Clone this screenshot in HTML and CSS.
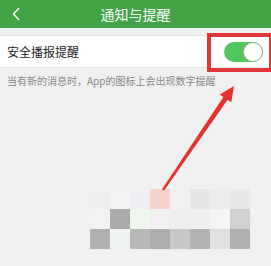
FILE: index.html
```html
<!DOCTYPE html>
<html lang="zh">
<head>
<meta charset="utf-8">
<link rel="stylesheet" href="styles.css">
</head>
<body>
<div class="page">
  <header class="bar">
    <svg class="back" width="8" height="14" viewBox="0 0 8 14"><path d="M7 1 L1.5 7 L7 13" fill="none" stroke="#fff" stroke-width="1.4"/></svg>
    <div class="title">通知与提醒</div>
    <div></div>
  </header>
  <div class="row">
    <span class="label">安全播报提醒</span>
    <span class="switch"><span class="knob"></span></span>
  </div>
  <p class="desc">当有新的消息时，App的图标上会出现数字提醒</p>
  <div class="mosaic">
    <i style="background:#eeeeee"></i><i style="background:#f2f2f2"></i><i style="background:#eeeef4"></i><i style="background:#f8d2ca"></i><i style="background:#f0f0f0"></i><i style="background:#e6e6e6"></i><i style="background:#ebebeb"></i><i style="background:#e8e8e8"></i>
    <i style="background:#f2f2f2"></i><i style="background:#aaaaaa"></i><i style="background:#eef6ee"></i><i style="background:#f0f0f0"></i><i style="background:#eeeeee"></i><i style="background:#efefef"></i><i style="background:#f4f4f4"></i><i style="background:#d0d0d0"></i>
    <i style="background:#b0b0b0"></i><i style="background:#eef2f0"></i><i style="background:#b8b8b8"></i><i style="background:#acacac"></i><i style="background:#c8c8c8"></i><i style="background:#b2b2b2"></i><i style="background:#e0e0e0"></i><i style="background:#b0b0b0"></i>
  </div>
  <div class="mark"></div>
  <svg class="arrow" width="271" height="266" viewBox="0 0 271 266"><polygon points="234,86 231.3,102.3 227.6,99.8 164,190.7 162,189.3 223.4,97 219.7,94.5" fill="#e8302f"/></svg>
</div>
</body>
</html>
```
FILE: styles.css
```css
* { box-sizing: border-box; }
html, body { margin: 0; padding: 0; }
body { background: #f0f0f0; font-family: "Noto Sans CJK SC", "Noto Sans", sans-serif; }
.page { position: relative; width: 271px; height: 266px; overflow: hidden; }
.bar {
  height: 28px; background: #43a447;
  display: grid; grid-template-columns: 28px 1fr 28px; align-items: center;
}
.back { margin-left: 12px; }
.title { text-align: center; color: #fff; font-size: 14px; line-height: 28px; }
.row {
  margin-top: 7px; height: 33px; background: #fff;
  border-top: 1px solid #e2e2e2; border-bottom: 1px solid #e2e2e2;
  display: flex; align-items: center; justify-content: space-between;
  padding: 0 8px 0 7px;
}
.label { font-size: 12px; color: #222; }
.switch {
  width: 39px; height: 20px; border-radius: 10px; background: #52c65a;
  display: flex; justify-content: flex-end;
}
.knob { width: 20px; height: 20px; border-radius: 50%; background: #fff; border: 1px solid #a9a9a9; }
.desc { margin: 0; padding: 6px 7px 0; font-size: 10px; line-height: 14px; color: #888; }
.mosaic {
  margin: 101px 0 0 90px; width: 160px;
  display: grid; grid-template-columns: repeat(8, 20px); grid-auto-rows: 20px;
}
.mosaic i { display: block; }
.mark {
  position: absolute; left: 207px; top: 33px; width: 66px; height: 39px;
  border: 4px solid #e2373a;
}
.arrow { position: absolute; left: 0; top: 0; }
```
